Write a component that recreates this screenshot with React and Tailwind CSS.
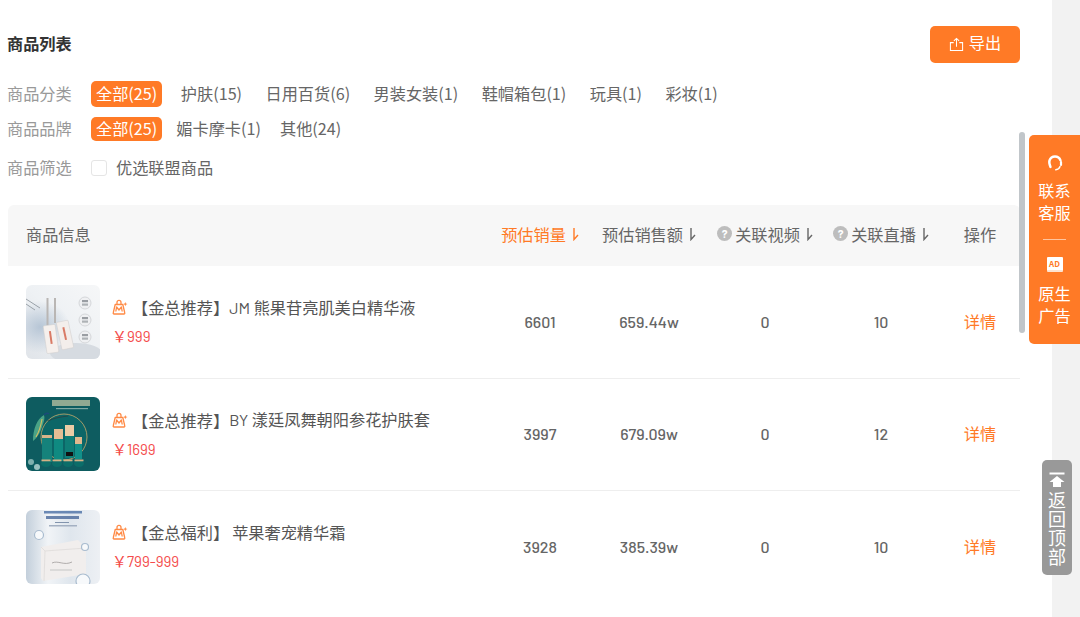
import React from "react";

const FONT = "font-['Noto_Sans_CJK_SC','Noto_Sans',sans-serif]";
const NUM = "font-['Barlow','Roboto','Noto_Sans_CJK_SC',sans-serif]";

function SortArrow() {
  return (
    <svg viewBox="0 0 8 14" className="w-2 h-[14px] ml-[5px]" fill="none" stroke="currentColor" strokeWidth="1.4">
      <path d="M3 1v11.5L7 8" />
    </svg>
  );
}

function Help() {
  return (
    <span className={`w-[15px] h-[15px] mr-[3px] rounded-full bg-[#bdbdbd] text-white text-[11px] leading-[15px] font-bold text-center shrink-0 ${NUM}`}>?</span>
  );
}

function Bag() {
  return (
    <svg viewBox="0 0 16 16" className="w-[16px] h-[16px] shrink-0" fill="none" stroke="#ff8a45" strokeWidth="1.3" strokeLinejoin="round">
      <path d="M3.2 5.5h7.6l2 8.5a.8.8 0 0 1-.8 1H2a.8.8 0 0 1-.8-1z" />
      <path d="M5 5.5V3.4a2 2 0 0 1 4 0v2.1" />
      <path d="M3.8 12.5l.8-4.5L7 11l2.4-3 .8 4.5" />
      <path d="M13.3 3l.6 1.5 1.6.6-1.6.6-.6 1.5-.6-1.5-1.6-.6 1.6-.6z" fill="#ff8a45" stroke="none" />
    </svg>
  );
}

function ThumbOne() {
  return (
    <svg viewBox="0 0 74 74" className="w-[74px] h-[74px] rounded-md shrink-0">
      <defs>
        <linearGradient id="a1" x1="1" y1="0" x2="0" y2="1">
          <stop offset="0" stopColor="#f6f7f8" />
          <stop offset="0.5" stopColor="#eef1f4" />
          <stop offset="1" stopColor="#e0e4e9" />
        </linearGradient>
        <radialGradient id="a2" cx="0.5" cy="0.5" r="0.5">
          <stop offset="0" stopColor="#b7c6d6" />
          <stop offset="1" stopColor="#b7c6d6" stopOpacity="0" />
        </radialGradient>
      </defs>
      <rect width="74" height="74" fill="url(#a1)" />
      <ellipse cx="14" cy="42" rx="30" ry="26" fill="url(#a2)" />
      <ellipse cx="50" cy="68" rx="26" ry="10" fill="#d6dbe1" />
      <path d="M0 14l14 9M0 19l9 6" stroke="#9aa1a8" strokeWidth="1" />
      <rect x="20.5" y="13" width="2" height="27" fill="#b9b6b4" />
      <rect x="28" y="13" width="2" height="25" fill="#b9b6b4" />
      <g transform="rotate(-8 25 54)">
        <rect x="19" y="40" width="12" height="28" rx="1" fill="#f5f0ed" stroke="#cfcdcd" strokeWidth="0.5" />
        <rect x="24" y="46" width="2" height="13" fill="#d97b66" />
      </g>
      <g transform="rotate(-12 39 50)">
        <rect x="33" y="36" width="12" height="28" rx="1" fill="#f3eeeb" stroke="#cfcdcd" strokeWidth="0.5" />
        <rect x="38" y="42" width="2" height="13" fill="#d97b66" />
      </g>
      {[18, 35, 52].map((y) => (
        <g key={y}>
          <circle cx="59" cy={y} r="6" fill="#eff0f2" stroke="#d5d7da" />
          <rect x="56" y={y - 3} width="6" height="2.2" fill="#9a9ea3" />
          <rect x="56" y={y + 0.5} width="6" height="2.2" fill="#aeb2b6" />
        </g>
      ))}
    </svg>
  );
}

function ThumbTwo() {
  return (
    <svg viewBox="0 0 74 74" className="w-[74px] h-[74px] rounded-md shrink-0">
      <rect width="74" height="74" fill="#0e5c60" />
      <circle cx="38" cy="40" r="23" fill="#0c6667" stroke="#c9a96a" strokeWidth="0.8" />
      <rect x="26" y="3" width="38" height="6" fill="#d9d2ae" opacity="0.65" />
      <rect x="30" y="11" width="32" height="1.2" fill="#7fa8a3" />
      <path d="M7 44C7 32 11 22 18 18c1 3 0 6-1 9-2 7-5 13-10 17z" fill="#4aa386" />
      <path d="M10 40c3-5 5-12 6-18" stroke="#d8bd60" strokeWidth="1.1" fill="none" />
      <path d="M18 18c2-2 4-2 5-1" stroke="#1d4a7a" strokeWidth="1.5" fill="none" />
      <path d="M22 24c6-3 12-4 20-5" stroke="#2c3f40" strokeWidth="0.8" fill="none" />
      <rect x="16" y="38" width="10" height="27" fill="#15827b" />
      <rect x="16" y="38" width="10" height="3" fill="#d8b48a" />
      <rect x="28" y="32" width="9" height="10" fill="#e3bd94" />
      <rect x="28" y="42" width="9" height="22" fill="#0f8a81" />
      <rect x="39" y="28" width="9" height="11" fill="#ebcca6" />
      <rect x="39" y="39" width="9" height="22" fill="#0f7e77" />
      <rect x="40" y="55" width="7" height="4" fill="#111" />
      <rect x="49" y="40" width="7" height="7" fill="#dfb88e" />
      <rect x="49" y="47" width="7" height="15" fill="#119089" />
      {[20, 31, 42, 53].map((x) => (
        <g key={x}>
          <ellipse cx={x} cy="66.5" rx="5" ry="3.5" fill="#0b6d69" />
          <rect x={x - 4.5} y="62.5" width="9" height="1.8" fill="#d3b185" />
        </g>
      ))}
      <circle cx="5" cy="65" r="3" fill="#7fb0ae" />
      <circle cx="11" cy="70" r="3" fill="#9ac1bf" />
    </svg>
  );
}

function ThumbThree() {
  return (
    <svg viewBox="0 0 74 74" className="w-[74px] h-[74px] rounded-md shrink-0">
      <defs>
        <linearGradient id="c1" x1="0" y1="0" x2="1" y2="0">
          <stop offset="0" stopColor="#c3cfdb" />
          <stop offset="0.3" stopColor="#f1f4f7" />
          <stop offset="0.6" stopColor="#dfe6ed" />
          <stop offset="1" stopColor="#edf0f4" />
        </linearGradient>
      </defs>
      <rect width="74" height="74" fill="url(#c1)" />
      <rect x="18" y="1" width="38" height="2.5" fill="#4a6fa5" opacity="0.8" />
      <rect x="20" y="6" width="33" height="3" fill="#3d5f94" opacity="0.75" />
      <rect x="29" y="12" width="14" height="1" fill="#8294ad" />
      <rect x="23" y="15" width="28" height="1.5" fill="#a3b0c2" />
      <path d="M15 37l37-7 8 8v26L17 71l-2-3z" fill="#f1eeed" />
      <path d="M15 37l4 4 41-3M19 41l-1 30" stroke="#dbd8d7" fill="none" strokeWidth="0.7" />
      <path d="M26 53c6-3 12 3 20-1" stroke="#9f9c9a" fill="none" strokeWidth="0.8" />
      <path d="M24 60h22" stroke="#bbb" strokeWidth="0.8" />
      <circle cx="13" cy="25" r="4.5" fill="#f7f9fb" stroke="#a9bccf" strokeWidth="1.2" />
      <circle cx="59" cy="37" r="3.5" fill="#f7f9fb" stroke="#a9bccf" strokeWidth="1.2" />
      <circle cx="57" cy="71" r="7" fill="#f7f9fb" stroke="#a9bccf" strokeWidth="1.2" />
    </svg>
  );
}

const rows = [
  { Thumb: ThumbOne, tag: "【金总推荐】", name: "JM 熊果苷亮肌美白精华液", price: "￥999", a: "6601", b: "659.44w", c: "0", d: "10" },
  { Thumb: ThumbTwo, tag: "【金总推荐】", name: "BY 漾廷凤舞朝阳参花护肤套", price: "￥1699", a: "3997", b: "679.09w", c: "0", d: "12" },
  { Thumb: ThumbThree, tag: "【金总福利】", name: "苹果奢宠精华霜", price: "￥799-999", a: "3928", b: "385.39w", c: "0", d: "10" },
];

const cats = ["护肤(15)", "日用百货(6)", "男装女装(1)", "鞋帽箱包(1)", "玩具(1)", "彩妆(1)"];

export default function App() {
  return (
    <div className={`relative w-[1080px] h-[617px] overflow-hidden bg-[#f2f2f2] ${FONT}`}>
      <div className="w-[1052px] h-[617px] bg-white pl-2 pr-8 pt-[26px] overflow-hidden">
        <div className="flex items-center justify-between h-[37px]">
          <h2 className="text-[16.2px] leading-6 font-bold text-[#333] -mt-[3px] -ml-px">商品列表</h2>
          <button className="w-[90px] h-[37px] rounded-[5px] bg-[#ff7a26] text-white text-[16.2px] flex items-center justify-center gap-[5px] pb-[4px]">
            <svg viewBox="0 0 16 16" className="w-[15px] h-[15px] mt-[4px]" fill="none" stroke="currentColor" strokeWidth="1.1">
              <path d="M5 6H1.5v8.5h13V6H11" />
              <path d="M8 10.5V1.5M5.2 4.2L8 1.5l2.8 2.7" />
            </svg>
            导出
          </button>
        </div>

        <div className="flex items-center mt-[18px] h-[26px] text-[16.2px] text-[#666]">
          <span className="w-[84px] -ml-px pb-[2px] text-[#999]">商品分类</span>
          <span className="h-[26px] px-[5px] leading-[24px] rounded-[5px] bg-[#ff7a26] text-white">全部(25)</span>
          <div className="flex gap-[23.4px] ml-[18.5px] pb-[2px]">
            {cats.map((c) => (
              <span key={c}>{c}</span>
            ))}
          </div>
        </div>

        <div className="flex items-center mt-[10px] h-[24px] text-[16.2px] text-[#666]">
          <span className="w-[84px] -ml-px pb-[2px] text-[#999]">商品品牌</span>
          <span className="h-[24px] px-[5px] leading-[22px] rounded-[5px] bg-[#ff7a26] text-white">全部(25)</span>
          <span className="ml-[14px] pb-[2px]">媚卡摩卡(1)</span>
          <span className="ml-[19px] pb-[2px]">其他(24)</span>
        </div>

        <div className="flex items-center mt-[15px] h-[24px] text-[16.2px] text-[#666]">
          <span className="w-[84px] -ml-px pb-[2px] text-[#999]">商品筛选</span>
          <span className="w-4 h-4 rounded-[3px] border border-[#e5e5e5] bg-white" />
          <span className="ml-[9px] pb-[2px]">优选联盟商品</span>
        </div>

        <div className="mt-[25px] h-[61px] pl-[18px] pb-[3px] rounded-t-md bg-[#f7f7f7] grid grid-cols-[1fr_100px_118px_114px_118px_80px] items-center text-[16.2px] text-[#666]">
          <span>商品信息</span>
          <span className="flex items-center justify-center text-[#ff7a26]">预估销量<SortArrow /></span>
          <span className="flex items-center justify-center">预估销售额<SortArrow /></span>
          <span className="flex items-center justify-center"><Help />关联视频<SortArrow /></span>
          <span className="flex items-center justify-center"><Help />关联直播<SortArrow /></span>
          <span className="text-center">操作</span>
        </div>

        {rows.map((r, i) => (
          <div key={r.a} className={`h-[112.5px] pl-[18px] grid grid-cols-[1fr_100px_118px_114px_118px_80px] items-center text-[#666] border-b ${i === 2 ? "border-transparent" : "border-[#eee]"}`}>
            <div className="flex items-center">
              <r.Thumb />
              <div className="ml-[12px] -mt-[1px]">
                <div className="flex items-center text-[16.2px] text-[#555] h-6 pb-[2px]">
                  <Bag />
                  <span className="ml-[4px]">{r.tag}</span>
                  <span className={i === 2 ? "ml-[3px]" : ""}>
                    {i < 2 ? <span className={NUM}>{r.name.slice(0, 2)}</span> : null}
                    {i < 2 ? r.name.slice(2) : r.name}
                  </span>
                </div>
                <div className={`mt-[6px] ${NUM} text-[15px] leading-5 text-[#f44b4b]`}>{r.price}</div>
              </div>
            </div>
            <span className={`text-center text-base font-medium ${NUM}`}>{r.a}</span>
            <span className={`text-center text-base font-medium ${NUM}`}>{r.b}</span>
            <span className={`text-center text-base font-medium ${NUM}`}>{r.c}</span>
            <span className={`text-center text-base font-medium ${NUM}`}>{r.d}</span>
            <span className="text-center text-[16.2px] text-[#ff7a26] pb-[2px]">详情</span>
          </div>
        ))}
      </div>

      <div className="absolute left-[1019px] top-[132px] w-[6px] h-[201px] rounded-full bg-[#c1c6ca]" />

      <div className="absolute left-[1029px] top-[135px] w-[51px] h-[209px] rounded-l-[5px] bg-[#ff7a26] text-white flex flex-col items-center pt-[18px] text-[16.2px] leading-[21.5px]">
        <svg viewBox="0 0 16 20" className="w-4 h-5" fill="none" stroke="currentColor" strokeLinecap="round">
          <path d="M3.5 14C2 10.5 2 9 2.5 7.5 3.4 4.9 5.4 3.5 8 3.5s4.6 1.4 5.5 3.8" strokeWidth="2.4" />
          <path d="M14 9v3" strokeWidth="2.2" />
          <path d="M13 13.5c-.6 2-2 3-4.2 3.3" strokeWidth="1.4" />
        </svg>
        <span className="mt-[7px] w-[33px] text-center">联系客服</span>
        <span className="w-[23px] h-px bg-[#ffc49e] mt-[16px]" />
        <span className="mt-[17px] w-4 h-[15px] rounded-[1px] bg-white text-[#ff7a26] text-[8px] leading-[13px] font-bold text-center border-b-2 border-[#fde3d1]">AD</span>
        <span className="mt-[11px] w-[33px] text-center">原生广告</span>
      </div>

      <div className="absolute left-[1042px] top-[460px] w-[30px] h-[115px] rounded-[5px] bg-[#999] text-white flex flex-col items-center pt-[12px]">
        <svg viewBox="0 0 16 16" className="w-4 h-4" fill="currentColor">
          <rect x="0.5" y="0.5" width="15" height="2" />
          <path d="M8 4l7.5 6h-3.5v5H4v-5H0.5z" />
        </svg>
        <span className="w-[18px] text-lg leading-[19px] text-center mt-[2px]">返回顶部</span>
      </div>
    </div>
  );
}
